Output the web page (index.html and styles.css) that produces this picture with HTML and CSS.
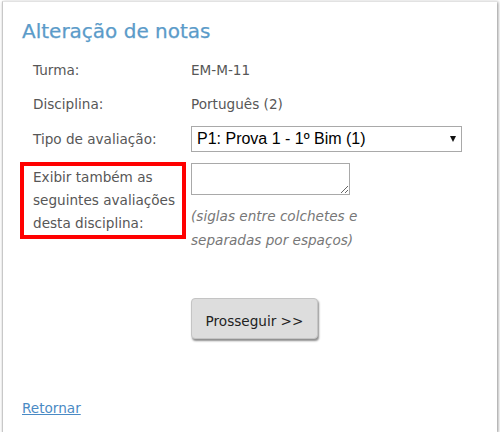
FILE: index.html
```html
<!DOCTYPE html>
<html lang="pt">
<head>
<meta charset="utf-8">
<title>Alteração de notas</title>
<link rel="stylesheet" href="styles.css">
</head>
<body>
<div class="card">
  <h1 class="title">Alteração de notas</h1>
  <div class="form">
    <div class="label row1">Turma:</div>
    <div class="value row1">EM-M-11</div>
    <div class="label row2">Disciplina:</div>
    <div class="value row2">Português (2)</div>
    <div class="label row3">Tipo de avaliação:</div>
    <div class="value row3">
      <div class="select-wrap">
        <select class="select"><option>P1: Prova 1 - 1º Bim (1)</option></select>
      </div>
    </div>
    <div class="label highlight">Exibir também as seguintes avaliações desta disciplina:</div>
    <div class="value extra">
      <textarea class="textarea"></textarea>
      <div class="hint">(siglas entre colchetes e separadas por espaços)</div>
    </div>
  </div>
  <div class="actions">
    <button class="button">Prosseguir &gt;&gt;</button>
  </div>
  <a class="back" href="#">Retornar</a>
</div>
</body>
</html>
```
FILE: styles.css
```css
html, body {
  margin: 0;
  padding: 0;
  background: #fff;
}
body {
  font-family: "DejaVu Sans", Verdana, sans-serif;
  font-size: 13.6px;
  color: #575757;
}
.card {
  box-sizing: border-box;
  margin: 1px 3px 0 2px;
  height: 431px;
  border-top: 1px solid #e2e2e2;
  border-left: 1px solid #c8c8c8;
  box-shadow: 1px 1px 3px rgba(0,0,0,0.45);
  padding: 0 20px 15px 17px;
  display: flex;
  flex-direction: column;
}
.title {
  margin: 16px 0 0 2px;
  font-size: 20px;
  line-height: 26px;
  font-weight: normal;
  color: #5b9bc9;
  -webkit-text-stroke: 0.25px #5b9bc9;
}
.form {
  margin-top: 9px;
  display: grid;
  grid-template-columns: 166px 1fr;
  column-gap: 5px;
}
.label {
  padding-left: 13px;
  display: flex;
  align-items: center;
}
.value {
  display: flex;
  align-items: center;
}
.row1, .row2 { height: 34px; }
.row3 { height: 35px; }
.highlight {
  margin-top: 6px;
  border: 4px solid #ff0000;
  padding: 0 0 0 9px;
  line-height: 23px;
  align-items: flex-start;
  align-self: start;
}
.extra {
  margin-top: 5px;
  flex-direction: column;
  align-items: flex-start;
}
.select-wrap {
  position: relative;
  width: 271px;
}
.select {
  appearance: none;
  -webkit-appearance: none;
  display: block;
  width: 271px;
  height: 26px;
  margin: 0;
  padding: 0 0 0 5px;
  border: 1px solid #a9a9a9;
  background: #fff;
  font-family: "Liberation Sans", Arial, sans-serif;
  font-size: 16px;
  color: #000;
}
.select-wrap::after {
  content: "";
  position: absolute;
  right: 6px;
  top: 10px;
  border-left: 3.5px solid transparent;
  border-right: 3.5px solid transparent;
  border-top: 6px solid #111;
  pointer-events: none;
}
.textarea {
  display: block;
  box-sizing: border-box;
  width: 159px;
  height: 32px;
  margin: 2px 0 9px 0;
  border: 1px solid #a9a9a9;
  padding: 2px;
  font-family: "DejaVu Sans", sans-serif;
}
.hint {
  font-style: italic;
  color: #777;
  line-height: 24px;
  width: 200px;
}
.actions {
  margin-top: 46px;
  padding-left: 171px;
}
.button {
  width: 127px;
  height: 41px;
  background: #ddd;
  border: 1px solid #c4c4c4;
  border-radius: 4px;
  box-shadow: 1px 2px 2px rgba(0,0,0,0.45);
  font-family: "DejaVu Sans", Verdana, sans-serif;
  font-size: 13.6px;
  color: #222;
  padding: 4px 0 0 0;
}
.back {
  margin-top: auto;
  margin-left: 2px;
  align-self: flex-start;
  color: #4a8ac4;
  line-height: 17px;
}
```
